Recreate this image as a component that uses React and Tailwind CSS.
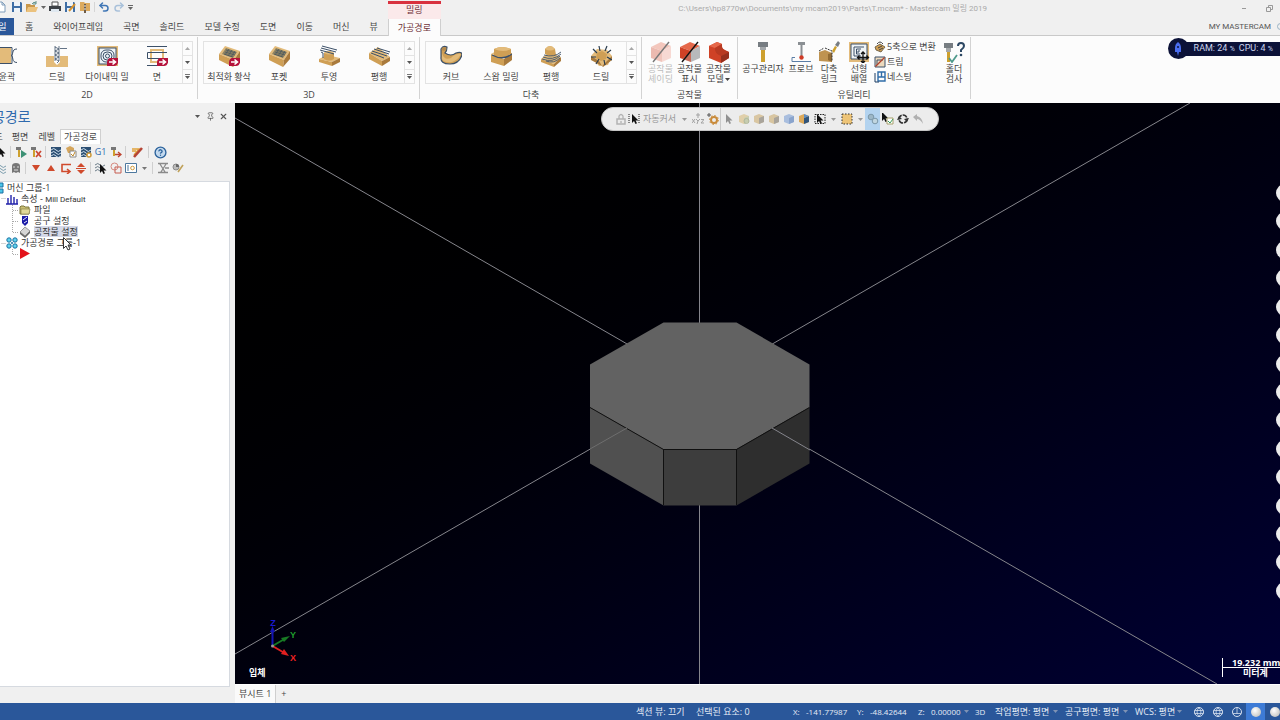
import { CircleHelp, Pin, Redo2, Undo2, X } from "lucide-react";

const WOOD = "#e3bb7a";
const WOOD_MID = "#cf9f55";
const WOOD_DARK = "#a97a3c";
const NAVY = "#3c5068";

function Icon({ size = 22, box = 22, children }) {
  return (
    <svg width={size} height={size} viewBox={`0 0 ${box} ${box}`} fill="none" aria-hidden="true" className="shrink-0">
      {children}
    </svg>
  );
}

function Caret({ className = "" }) {
  return (
    <svg width="5" height="3" viewBox="0 0 5 3" aria-hidden="true" className={`shrink-0 ${className}`}>
      <path d="M0 0h5L2.5 3z" fill="currentColor" />
    </svg>
  );
}

/* ---------- ribbon icons ---------- */

function ArrowBadge() {
  return (
    <g>
      <path d="M14 13h8v4.500q-1 3.500-4 3.500h-7v-4q1-4 3-4z" fill="#b5123b" />
      <path d="M13 17h5.500M16.500 14.500l3 2.500-3 2.500" stroke="#fff" strokeWidth="1.600" />
    </g>
  );
}

function ContourIcon() {
  return (
    <Icon>
      <path d="M1 3h14v15H1z" fill={WOOD} />
      <path d="M0 2.500h16v16H0M21 4c-6 0-3 6-6 6.500 3 .5 0 7 6 7" stroke={NAVY} />
    </Icon>
  );
}

function DrillIcon() {
  return (
    <Icon>
      <path d="M0 11h8v6l3 3 3-3v-6h8v11H0z" fill={WOOD} />
      <path d="M8 1h6v15l-3 3-3-3z" fill="#fff" />
      <path d="M9 2l4 2-4 2 4 2-4 2 4 2-4 2 4 2-2 2M9 1v15M13 1v15M14 3.500h7" stroke={NAVY} strokeWidth=".8" />
    </Icon>
  );
}

function DynamicMillIcon() {
  return (
    <Icon>
      <path d="M1 1h21v20H1z" fill={WOOD} />
      <rect x="3" y="3" width="17" height="16" fill="#edf3f7" stroke={NAVY} />
      <rect x="5" y="5" width="13" height="12" rx="5" stroke={NAVY} />
      <rect x="7" y="7" width="9" height="8" rx="4" stroke={NAVY} />
      <rect x="9.500" y="9" width="4" height="4" rx="2" stroke={NAVY} />
      <ArrowBadge />
    </Icon>
  );
}

function FaceIcon() {
  return (
    <Icon>
      <rect x="5" y="5" width="12" height="12" stroke={WOOD} strokeWidth="2" />
      <path d="M1 1.500h20M21 7.500H1.500v6H21M1 20.500h12" stroke={NAVY} />
      <ArrowBadge />
    </Icon>
  );
}

function PocketIcon({ badge }) {
  return (
    <Icon>
      <path d="M1 9 7 1l15 5-6 9z" fill={WOOD} />
      <path d="M1 9l15 6-1 7-14-7z" fill={WOOD_MID} />
      <path d="M16 15l6-9v8l-7 8z" fill={WOOD_DARK} />
      <path d="M4 9l4-6 11 4-4 6z" fill="#8d8262" />
      <path d="M6 9l9 3M7 7l10 3M8 5l10 3M7 10l4-6M10 11l4-6M13 12l4-6" stroke="#4d5960" strokeWidth=".8" />
      {badge && <ArrowBadge />}
    </Icon>
  );
}

function ProjectIcon() {
  return (
    <Icon>
      <path d="M1 14l8-4 13 3-8 4z" fill={WOOD} />
      <path d="M1 14l13 3v4L1 17z" fill={WOOD_MID} />
      <path d="M14 17l8-4v4l-8 4z" fill={WOOD_DARK} />
      <path d="M6 14V8q4-4 10 0v6q-5 3-10 0z" fill={WOOD_MID} />
      <path d="M6 8q4-4 10 0-4 3-10 0z" fill={WOOD} />
      <path d="M3 3l15 4M4 1l15 4M2 5l14 4M3 7l2 1v5" stroke={NAVY} />
    </Icon>
  );
}

function ParallelIcon() {
  return (
    <Icon>
      <path d="M1 8 10 2l12 10-8 4z" fill={WOOD} />
      <path d="M1 8l13 8v5L1 14z" fill={WOOD_MID} />
      <path d="M14 16l8-4v4l-8 5z" fill={WOOD_DARK} />
      <path d="M4 6l15 5M6 4l15 5M9 3l13 4M3 8l13 5" stroke={NAVY} />
    </Icon>
  );
}

function CurveIcon() {
  return (
    <Icon>
      <path d="M1 4q2-4 6-2 0 4-2 6 6 4 11 0 6-2 6 2-3 9-12 9Q0 19 1 12z" fill={WOOD_MID} stroke={NAVY} strokeWidth="1.200" />
      <path d="M2 8q2 8 9 5 5-5 10-4-3 6-9 8-8 1-10-3z" fill={WOOD} />
      <ellipse cx="4" cy="4" rx="2.500" ry="1.800" fill="#b58a4b" />
    </Icon>
  );
}

function SwarfIcon() {
  return (
    <Icon>
      <path d="M1 9l7-4 14 3-8 5z" fill={WOOD} />
      <path d="M1 9l13 5v7L1 17z" fill={WOOD_MID} />
      <path d="M14 14l8-6v7l-8 6z" fill={WOOD_DARK} />
      <path d="M4 4q8-4 17 0v5q-8 5-17 2z" fill={WOOD_MID} />
      <path d="M4 4q8-4 17 0-8 4-17 0z" fill={WOOD} />
      <path d="M2 10q11 6 20-1" stroke={NAVY} strokeWidth="1.300" />
    </Icon>
  );
}

function MultiParallelIcon() {
  return (
    <Icon>
      <path d="M1 14l8-7 12 5-7 7z" fill={WOOD} />
      <path d="M1 14l13 5v3L1 17z" fill={WOOD_MID} />
      <path d="M14 19l7-7v4l-7 6z" fill={WOOD_DARK} />
      <path d="M5 9V4q5-6 10 0l1 6q-5 2-11-1z" fill={WOOD_MID} />
      <path d="M5 4q5-6 10 0-5 3-10 0z" fill={WOOD} />
      <path d="M4 10q10 3 17-3M3 12q10 4 18-3M2 14q11 4 18-3M6 16q8 3 14-3" stroke={NAVY} strokeWidth=".9" />
    </Icon>
  );
}

function MultiDrillIcon() {
  return (
    <Icon>
      <path d="M1 11l6-7 10 1 5 6-4 9-9 1z" fill={WOOD} />
      <path d="M1 11l8 5 3 5-11-6zM12 21l10-10v4l-9 7z" fill={WOOD_DARK} />
      <path d="M7 8l5-2 5 3-1 5-5 2-5-3z" fill={WOOD_MID} />
      <path d="M9 1l1 5M17 1l-2 5M3 4l4 4M21 5l-4 3M1 12h5M17 12l5 3M6 19l3-5M15 20l-1-5" stroke="#2b3d4e" strokeWidth="1.200" />
    </Icon>
  );
}

function StockIcon({ variant }) {
  const faded = variant === "shade";
  if (variant === "model") {
    return (
      <Icon>
        <path d="M1 5l8-4 5 2-1 4 8 4v6l-8 5-12-5z" fill="#cf4226" />
        <path d="M1 5l8-4 5 2-7 4z" fill="#e5684a" />
        <path d="M7 7l7-4q-1 6 7 8l-8 4q-7-3-6-8z" fill="#b83a22" />
        <path d="M13 15l8-4v6l-8 5z" fill="#96301e" />
      </Icon>
    );
  }
  return (
    <Icon>
      <g opacity={faded ? 0.35 : 1}>
        <path d="M1 6 11 1l10 4-9 5z" fill="#e5684a" />
        <path d="M1 6l11 4v11L1 17z" fill="#cf4226" />
        <path d="M12 10l9-5v12l-9 4z" fill={faded ? "#ef9a8a" : "#b7b9bb"} />
        <path d="M12 10v11L3 18z" fill={faded ? "#ef9a8a" : "#b7b9bb"} opacity=".35" />
      </g>
      <path d="M3 21 19 1" stroke={faded ? "#777" : "#111"} strokeWidth="1.400" />
    </Icon>
  );
}

function ToolManagerIcon() {
  return (
    <Icon>
      <path d="M6 1h10v5H6z" fill="#777d82" />
      <path d="M8 6h6v3H8z" fill="#a3a7aa" />
      <path d="M9 9h4v12H9z" fill="#cda02e" />
    </Icon>
  );
}

function ProbeIcon() {
  return (
    <Icon>
      <path d="M8 1h7v3H8z" fill="#8a8f93" />
      <path d="M11.500 4v12" stroke="#8a8f93" strokeWidth="2" />
      <circle cx="11.500" cy="16.500" r="2.200" fill="#cf3b26" />
      <path d="M5 16.500H2v4h19" stroke="#5b7ea6" />
    </Icon>
  );
}

function MultiLinkIcon() {
  return (
    <Icon>
      <path d="M1 11l6-2 7 3v9L1 20z" fill="#bf9350" />
      <path d="M14 12v9l-4-2v-6z" fill="#926b33" />
      <path d="M1 10l5-3M7 7l7 3v10" stroke="#333" strokeDasharray="2 1" />
      <path d="M14 10l3-5 2 1-3 6z" fill="#cda02e" />
      <path d="M17 4l3-4 2 2-2 4z" fill="#777d82" />
    </Icon>
  );
}

function LinearArrayIcon() {
  return (
    <Icon>
      <path d="M1 1h20v20H1z" fill={WOOD} />
      <path d="M3 3h16v15H3z" fill="#f0f4f6" stroke={NAVY} />
      <path d="M16 6H6v9h7M13 8H8.500v5H12M12 10h-2v2" stroke={NAVY} />
      <path d="M15 11v11M9.500 16.500h11M13 13l2-2 2 2M13 20l2 2 2-2M11.500 14.500l-2 2 2 2M18.500 14.500l2 2-2 2" stroke="#111" strokeWidth="1.300" />
    </Icon>
  );
}

function HolderCheckIcon() {
  return (
    <Icon>
      <path d="M1 2h9v5H1z" fill="#777d82" />
      <path d="M3 7h5v4H3z" fill="#a3a7aa" />
      <path d="M4 11h3v10H4z" fill="#cda02e" />
      <path d="M6 17l3 4 5-7" stroke="#4f9a8c" strokeWidth="1.800" />
      <path d="M15 5q0-3 3-3t3 3q0 2-3 4v2" stroke="#2c4763" strokeWidth="2" />
      <circle cx="18" cy="14" r="1.300" fill="#2c4763" />
    </Icon>
  );
}

function FiveAxisIcon() {
  return (
    <Icon size={12} box={12}>
      <path d="M1 6l5-3 5 3-4 5-5-2z" fill={WOOD_MID} stroke="#5d5138" strokeWidth=".8" />
      <path d="M3 3q3-4 6 0M4 7l4-2M5 9l4-2" stroke="#444" />
    </Icon>
  );
}

function TrimIcon() {
  return (
    <Icon size={12} box={12}>
      <path d="M1 1h10v10H1z" fill="#ecd9bd" stroke={NAVY} />
      <path d="M3 4h6M3 4v5" stroke={NAVY} />
      <path d="M1.500 10.500l9-9" stroke="#b4412a" strokeWidth="1.300" />
    </Icon>
  );
}

function NestingIcon() {
  return (
    <Icon size={12} box={12}>
      <path d="M4 1h7v9H4zM4 6h7M7.500 1v5" stroke="#2f6ca8" strokeWidth="1.400" />
      <path d="M1 2v9h4" stroke="#1c3c63" />
    </Icon>
  );
}

/* ---------- ribbon ---------- */

function Gallery({ label, items }) {
  return (
    <section className="flex shrink-0 flex-col border-r border-[#d3d3d3] pt-1 pr-1 pl-[5px]">
      <div className="flex h-[46px] border border-[#e3e3e3]">
        {items.map(([name, icon]) => (
          <button key={name} type="button" className="flex w-[50px] flex-col items-center gap-1 pt-[3px] whitespace-nowrap">
            {icon}
            <span className="leading-[12px]">{name}</span>
          </button>
        ))}
        <div className="flex w-[10px] flex-col divide-y divide-[#e3e3e3] border-l border-[#e3e3e3] text-[#555]">
          <button type="button" aria-label={`${label} ▲`} className="flex flex-1 items-center justify-center">
            <Caret className="rotate-180 opacity-50" />
          </button>
          <button type="button" aria-label={`${label} ▼`} className="flex flex-1 items-center justify-center">
            <Caret />
          </button>
          <button type="button" aria-label={label} className="flex flex-1 flex-col items-center justify-center gap-px">
            <span className="h-px w-[5px] bg-[#777]" />
            <Caret />
          </button>
        </div>
      </div>
      <h2 className="mt-[5px] text-center leading-3">{label}</h2>
    </section>
  );
}

function BigButton({ width, icon, lines, disabled, menu }) {
  return (
    <button type="button" disabled={disabled} className={`flex shrink-0 flex-col items-center whitespace-nowrap ${width} ${disabled ? "text-[#bdbdbd]" : ""}`}>
      {icon}
      <span className="mt-px flex flex-col items-center leading-[10px]">
        <span>{lines[0]}</span>
        {lines[1] && (
          <span className="flex items-center gap-px">
            {lines[1]}
            {menu && <Caret />}
          </span>
        )}
      </span>
    </button>
  );
}

const gallery2d = [
  ["윤곽", <ContourIcon />],
  ["드릴", <DrillIcon />],
  ["다이내믹 밀", <DynamicMillIcon />],
  ["면", <FaceIcon />],
];
const gallery3d = [
  ["최적화 황삭", <PocketIcon badge />],
  ["포켓", <PocketIcon />],
  ["투영", <ProjectIcon />],
  ["평행", <ParallelIcon />],
];
const galleryMulti = [
  ["커브", <CurveIcon />],
  ["스왑 밀링", <SwarfIcon />],
  ["평행", <MultiParallelIcon />],
  ["드릴", <MultiDrillIcon />],
];
const smallTools = [
  ["5축으로 변환", <FiveAxisIcon />],
  ["트림", <TrimIcon />],
  ["네스팅", <NestingIcon />],
];

function Ribbon() {
  return (
    <div className="relative flex h-[68px] overflow-hidden border-t border-[#c9c9c9] bg-[#fcfcfc] pt-px pb-1">
      <div className="-ml-6 flex">
        <Gallery label="2D" items={gallery2d} />
        <Gallery label="3D" items={gallery3d} />
        <Gallery label="다축" items={galleryMulti} />
        <section className="flex shrink-0 flex-col border-r border-[#d3d3d3] px-1 pt-1">
          <div className="flex h-[46px]">
            <BigButton width="w-[29px]" icon={<StockIcon variant="shade" />} lines={["공작물", "셰이딩"]} disabled />
            <BigButton width="w-[29px]" icon={<StockIcon variant="show" />} lines={["공작물", "표시"]} />
            <BigButton width="w-[29px]" icon={<StockIcon variant="model" />} lines={["공작물", "모델"]} menu />
          </div>
          <h2 className="mt-[5px] text-center leading-3">공작물</h2>
        </section>
        <section className="flex shrink-0 flex-col border-r border-[#d3d3d3] pt-1">
          <div className="flex h-[46px]">
            <BigButton width="w-[50px]" icon={<ToolManagerIcon />} lines={["공구관리자"]} />
            <BigButton width="w-[26px]" icon={<ProbeIcon />} lines={["프로브"]} />
            <BigButton width="w-[30px]" icon={<MultiLinkIcon />} lines={["다축", "링크"]} />
            <BigButton width="w-[30px]" icon={<LinearArrayIcon />} lines={["선형", "배열"]} />
            <div className="flex w-[64px] flex-col gap-[3px]">
              {smallTools.map(([name, icon]) => (
                <button key={name} type="button" className="flex items-center gap-px leading-3 whitespace-nowrap">
                  {icon}
                  {name}
                </button>
              ))}
            </div>
            <BigButton width="w-[32px]" icon={<HolderCheckIcon />} lines={["홀더", "검사"]} />
          </div>
          <h2 className="mt-[5px] text-center leading-3">유틸리티</h2>
        </section>
      </div>
      <div className="absolute top-[2px] right-0 flex h-[21px] items-center font-['Roboto',sans-serif] text-[9px] text-[#cdd5ee]">
        <span className="z-10 flex size-[21px] items-center justify-center rounded-full bg-[#0c1238]">
          <svg width="8" height="14" viewBox="0 0 8 14" aria-hidden="true">
            <path d="M4 0q3 2 3 6v4H5l-1 4-1-4H1V6q0-4 3-6z" fill="#4a6df0" />
            <circle cx="4" cy="5" r="1" fill="#0c1238" />
          </svg>
        </span>
        <span className="-ml-2 flex h-[14px] items-center gap-1 bg-[#0c1238] pr-[7px] pl-[13px] whitespace-nowrap">
          <span>RAM: 24 <small className="text-[7px]">%</small></span>
          <span>CPU: 4 <small className="text-[7px]">%</small></span>
        </span>
      </div>
    </div>
  );
}

/* ---------- title bar and tabs ---------- */

function FolderIcon() {
  return (
    <Icon size={12} box={12}>
      <path d="M0 3h4l1 1h4v7H0z" fill="#c9974a" />
      <path d="M2 6h10l-2 5H0z" fill="#ebc27e" />
      <path d="M6 3q2-3 4-1M10 0v3H7" stroke="#5c8f87" />
    </Icon>
  );
}

function SaveIcon({ pencil }) {
  return (
    <Icon size={12} box={12}>
      <path d="M1 1h9l1 1v9H1z" fill="#3f6ea5" />
      <path d="M3 1h6v4H3zM3 7h6v4H3z" fill="#eef3f8" />
      {pencil && <path d="M5 10l6-7" stroke="#d7922d" strokeWidth="2" />}
    </Icon>
  );
}

function TitleBar() {
  return (
    <div className="flex h-[18px] items-start pt-px">
      <div className="-ml-1 flex items-center gap-[3px] text-[#666]">
        <button type="button" aria-label="새 파일">
          <Icon size={12} box={12}>
            <path d="M1 1h5l3 3v7H1zM6 1v3h3" fill="#fff" stroke="#7f9cba" />
          </Icon>
        </button>
        <button type="button" aria-label="저장"><SaveIcon /></button>
        <button type="button" aria-label="열기"><FolderIcon /></button>
        <Caret />
        <button type="button" aria-label="인쇄">
          <Icon size={12} box={12}>
            <path d="M3 1h6v4H3z" fill="#fff" stroke="#555" />
            <path d="M0 5h12v5H0z" fill="#3d4146" />
            <path d="M2 8h8v3H2z" fill="#dfe8f0" />
          </Icon>
        </button>
        <button type="button" aria-label="다른 이름으로 저장"><SaveIcon pencil /></button>
        <button type="button" aria-label="압축">
          <Icon size={12} box={12}>
            <path d="M1 1h4l1 1h5v8H1z" fill="#dcaa5e" />
            <path d="M5 3h2v9H5z" fill="#6d5c48" />
            <path d="M5 5h2M5 8h2" stroke="#eee" />
          </Icon>
        </button>
        <span className="h-[10px] w-px bg-[#d5d5d5]" />
        <button type="button" aria-label="실행 취소" className="text-[#3f76b5]"><Undo2 size={12} strokeWidth={3} /></button>
        <button type="button" aria-label="다시 실행" className="text-[#a9c1da]"><Redo2 size={12} strokeWidth={3} /></button>
        <span className="flex flex-col items-center gap-px">
          <span className="h-px w-[5px] bg-[#666]" />
          <Caret />
        </span>
      </div>
      <p className="ml-auto pr-[293px] font-['Roboto','Noto_Sans_CJK_KR',sans-serif] text-[8px] leading-[15px] whitespace-pre text-[#aaa]">
        C:\Users\hp8770w\Documents\my mcam2019\Parts\T.mcam* - Mastercam 밀링 2019
      </p>
      <div className="absolute top-0 right-[7px] flex h-4 items-center gap-[20px] text-[#999]">
        <button type="button" aria-label="최소화" className="h-px w-1 bg-[#999]" />
        <button type="button" aria-label="창 복원">
          <Icon size={7} box={7}>
            <path d="M.5 2.500h4v4h-4zM2.500 2.500v-2h4v4h-2" stroke="#999" />
          </Icon>
        </button>
      </div>
    </div>
  );
}

const ribbonTabs = ["홈", "와이어프레임", "곡면", "솔리드", "모델 수정", "도면", "이동", "머신", "뷰"];

function TabBar() {
  return (
    <nav className="flex h-[17px] items-stretch">
      <button type="button" className="-ml-[10px] mr-px w-[24px] bg-[#2a579a] pr-[11px] text-right whitespace-nowrap text-white">파일</button>
      {ribbonTabs.map((tab) => (
        <button key={tab} type="button" className="px-[10px] whitespace-nowrap">{tab}</button>
      ))}
      <button type="button" className="relative z-10 -mb-px border border-b-0 border-[#cfcfcf] bg-[#fcfcfc] px-[9px] whitespace-nowrap text-[#6e3038]">
        가공경로
        <span className="absolute -inset-x-px bottom-full h-[18px] border-t-[3px] border-[#d9303e] bg-[#fbe9ea] text-center leading-3">밀링</span>
      </button>
      <a href="#mastercam" className="ml-auto self-center pr-[6px] font-['Roboto',sans-serif] text-[8px] text-[#555]">MY MASTERCAM</a>
      <span className="-mr-1 size-[7px] self-center rounded-full border border-[#9ab3c4]" />
    </nav>
  );
}

/* ---------- toolpath manager ---------- */

function Sep() {
  return <span className="mx-[2px] h-3 w-px shrink-0 bg-[#cfcfcf]" />;
}

function Tool({ name, wide, children }) {
  return (
    <button type="button" aria-label={name} className={`flex shrink-0 items-center justify-center ${wide ? "w-[18px]" : "w-[15px]"}`}>
      {children}
    </button>
  );
}

function SmallTool({ children }) {
  return <Icon size={12} box={12}>{children}</Icon>;
}

function Pointer({ x = 0, y = 0, fill = "#111" }) {
  return <path transform={`translate(${x} ${y})`} d="M0 0v9l2-2 1.500 3 1.500-.8L3.600 6.500H6.500z" fill={fill} />;
}

function Waves({ gear }) {
  return (
    <SmallTool>
      <path d="M1 1h10v10H1z" fill="#2c4f73" />
      <path d="M1 4q3-3 5 0t5 0M1 7q3-3 5 0t5 0M1 10q3-3 5 0t5 0" stroke="#d2e2ef" />
      {gear && <circle cx="9" cy="9" r="2" fill="#fff" stroke="#d09a3a" strokeWidth="1.500" />}
    </SmallTool>
  );
}

function PanelTools() {
  return (
    <div className="flex flex-col">
      <div className="-ml-[7px] flex h-4 items-center">
        <Tool name="선택"><SmallTool><Pointer x={4} y={1} /></SmallTool></Tool>
        <Sep />
        <Tool name="모두 재생성">
          <SmallTool>
            <path d="M1 1h5v3H1z" fill="#777" />
            <path d="M3 4h2v7H3z" fill="#cda02e" />
            <path d="M6 4l6 4-6 4z" fill="#3d9175" />
          </SmallTool>
        </Tool>
        <Tool name="변경된 작업 재생성">
          <SmallTool>
            <path d="M1 1h5v3H1z" fill="#777" />
            <path d="M3 4h2v7H3z" fill="#cda02e" />
            <path d="M6 5l5 6M11 5l-5 6" stroke="#cc4630" strokeWidth="1.700" />
          </SmallTool>
        </Tool>
        <Sep />
        <Tool name="경로 재생"><Waves /></Tool>
        <Tool name="검증">
          <SmallTool>
            <path d="M1 2l4-2 4 2v5H3z" fill="#d5a55b" />
            <path d="M5 5h6v6H5z" fill="#fff" stroke="#888" />
            <path d="M6 8l2 2 2-4" stroke="#bd8626" />
          </SmallTool>
        </Tool>
        <Tool name="시뮬레이션"><Waves gear /></Tool>
        <Tool name="포스트"><span className="text-[9px] text-[#2f6aad]">G1</span></Tool>
        <Tool name="고속 이송">
          <SmallTool>
            <path d="M1 1h5v3H1z" fill="#777" />
            <path d="M3 4h2v6H3z" fill="#cda02e" />
            <path d="M5 8.500h5M8 6l3 2.500L8 11" stroke="#bd4430" strokeWidth="1.300" />
          </SmallTool>
        </Tool>
        <Sep />
        <Tool name="작업 편집" wide>
          <SmallTool>
            <path d="M1 3h7L3 9M1 5h4" stroke="#e0a33d" strokeWidth="1.500" />
            <path d="M3 11l8-9" stroke="#b54334" strokeWidth="2.600" />
          </SmallTool>
        </Tool>
        <Sep />
        <Tool name="도움말" wide><CircleHelp size={13} strokeWidth={2.500} className="text-[#2d639c]" fill="#c3d9ee" /></Tool>
      </div>
      <div className="-ml-[7px] flex h-4 items-center">
        <Tool name="경로 표시"><SmallTool><path d="M1 4q3-3 5 0t5 0M1 7q3-3 5 0t5 0M1 10q3-3 5 0t5 0" stroke="#7c9dad" /></SmallTool></Tool>
        <Tool name="포스트 잠금">
          <SmallTool>
            <path d="M2 11V4q0-3 4-3t4 3v7l-2-1-2 1-2-1z" fill="#777" />
            <path d="M4 4v2M8 4v2M4 8h4" stroke="#ddd" />
          </SmallTool>
        </Tool>
        <Sep />
        <Tool name="아래로 이동"><SmallTool><path d="M2 3h8l-4 6z" fill="#d04a2c" /></SmallTool></Tool>
        <Tool name="위로 이동"><SmallTool><path d="M2 9h8L6 3z" fill="#d04a2c" /></SmallTool></Tool>
        <Tool name="삽입 위치"><SmallTool><path d="M11 2.500H2v7h7M7 7l3 2.500L7 12" stroke="#d04a2c" strokeWidth="1.600" /></SmallTool></Tool>
        <Tool name="삽입 화살표 보기"><SmallTool><path d="M2 5h8L6 1zM2 8h8l-4 4zM1 6h10v1H1z" fill="#d04a2c" /></SmallTool></Tool>
        <Sep />
        <Tool name="선택한 경로만 표시">
          <SmallTool>
            <path d="M0 3q3-3 5 0t5 0M0 6q3-3 5 0M0 9q3-3 5 0" stroke="#6b7c88" />
            <Pointer x={5} y={2} />
          </SmallTool>
        </Tool>
        <Tool name="연관 지오메트리">
          <SmallTool>
            <circle cx="4.500" cy="4.500" r="3.500" stroke="#d58a80" />
            <path d="M5 5h6v6H5z" stroke="#c65c50" />
          </SmallTool>
        </Tool>
        <Tool name="표시 옵션">
          <SmallTool>
            <path d="M.5 1.500h11v9H.5z" fill="#fff" stroke="#4d789e" />
            <path d="M2 4h2M2 6h2M2 8h2" stroke="#4d789e" />
            <circle cx="7.500" cy="6" r="1.800" stroke="#d09a3a" />
          </SmallTool>
        </Tool>
        <span className="flex w-3 justify-center"><Caret className="text-[#777]" /></span>
        <Sep />
        <Tool name="가공 시간"><SmallTool><path d="M1 1.500h10M1 10.500h10M3 2l5 8M9 2l-5 8M8 6h4" stroke="#8a8a8a" strokeWidth="1.300" /></SmallTool></Tool>
        <Tool name="공구 확인">
          <SmallTool>
            <circle cx="4" cy="5" r="3" fill="#bbb" stroke="#8b8b8b" />
            <path d="M4 5V2a3 3 0 0 1 3 3z" fill="#666" />
            <path d="M6 10l5-7" stroke="#c0a15a" strokeWidth="1.600" />
          </SmallTool>
        </Tool>
      </div>
    </div>
  );
}

function GroupIcon() {
  return (
    <SmallTool>
      {[3, 9].map((x) => [3, 9].map((y) => (
        <circle key={`${x}-${y}`} cx={x} cy={y} r="2.200" fill="#5ed3ee" stroke="#1a6fa0" />
      )))}
      <path d="M5 6h2M6 5v2" stroke="#1a6fa0" />
    </SmallTool>
  );
}

function TreeRow({ indent, icon, children, selected }) {
  return (
    <li className={`flex h-[11px] items-center gap-[3px] whitespace-nowrap ${indent}`}>
      {icon}
      {children && <span className={`leading-[11px] ${selected ? "bg-[#d5d9e8]" : ""}`}>{children}</span>}
    </li>
  );
}

function OperationsTree() {
  return (
    <ul className="relative text-[#333]">
      <svg width="24" height="80" viewBox="0 0 24 80" fill="none" aria-hidden="true" className="absolute top-0 left-0">
        <path d="M1.500 16.500H6M12.500 23v28M13 28.500h6M13 39.500h6M13 50.500h6M1.500 61.500H6M12.500 67v5.500H19" stroke="#aaa" strokeDasharray="1 1" />
      </svg>
      <TreeRow indent="-ml-2" icon={
        <SmallTool>
          <path d="M2 1h9v4H2zM2 7h9v4H2z" fill="#4cc6ea" stroke="#1a6fa0" />
        </SmallTool>
      }>
        머신 그룹-1
      </TreeRow>
      <TreeRow indent="ml-[6px]" icon={<SmallTool><path d="M2 11V5M5 11V2M8 11V4M11 11V6M0 11h12" stroke="#2222aa" strokeWidth="1.400" /></SmallTool>}>
        속성 - <span className="font-['Roboto',sans-serif] text-[8px]">Mill Default</span>
      </TreeRow>
      <TreeRow indent="ml-[19px]" icon={
        <SmallTool>
          <path d="M1 3l1-1h3l1 1h4v7H1z" fill="#c9bf73" stroke="#7c763e" />
          <path d="M2 5h9l-1 5H2z" fill="#e0d898" stroke="#7c763e" strokeWidth=".6" />
        </SmallTool>
      }>
        파일
      </TreeRow>
      <TreeRow indent="ml-[19px]" icon={
        <SmallTool>
          <path d="M3 1h6v7l-3 3-3-3z" fill="#1c1ca8" />
          <path d="M4 5l4-3M5 8l3-2" stroke="#eef" />
        </SmallTool>
      }>
        공구 설정
      </TreeRow>
      <TreeRow indent="ml-[19px]" selected icon={
        <SmallTool>
          <path d="M1 6l5-5 5 4-5 5z" fill="#d5d5d5" stroke="#777" strokeWidth=".7" />
          <path d="M1 6l5 4 5-5v2l-5 5-5-4z" fill="#666" />
        </SmallTool>
      }>
        공작물 설정
      </TreeRow>
      <TreeRow indent="ml-[6px]" icon={<GroupIcon />}>가공경로 그룹-1</TreeRow>
      <TreeRow indent="ml-[19px]" icon={<Icon size={11} box={11}><path d="M1 0l10 5.500L1 11z" fill="#e3131b" /></Icon>} />
      <li aria-hidden="true" className="absolute top-[55px] left-[63px]">
        <svg width="9" height="14" viewBox="0 0 9 14">
          <path d="M.5.5v11l2.500-2.500 2 4 2-1-2-4h3z" fill="#fff" stroke="#333" />
        </svg>
      </li>
    </ul>
  );
}

function SidePanel() {
  return (
    <aside className="flex w-[235px] shrink-0 flex-col overflow-hidden bg-[#f0f0f0]">
      <div className="flex h-[26px] items-center">
        <h1 className="-ml-[21px] text-[14px] whitespace-nowrap text-[#2f6aad]">가공경로</h1>
        <div className="ml-auto flex items-center gap-1 pr-[7px] text-[#555]">
          <button type="button" aria-label="메뉴" className="flex w-[9px] justify-center"><Caret /></button>
          <button type="button" aria-label="고정"><Pin size={9} /></button>
          <button type="button" aria-label="닫기"><X size={9} strokeWidth={3} /></button>
        </div>
      </div>
      <div className="-ml-[26px] flex h-[15px] items-stretch whitespace-nowrap">
        <button type="button" className="px-1">솔리드</button>
        <button type="button" className="px-[5px]">평면</button>
        <button type="button" className="px-[5px]">레벨</button>
        <button type="button" className="border border-b-0 border-[#d0d0d0] bg-white px-[3px]">가공경로</button>
      </div>
      <PanelTools />
      <div className="mt-[5px] mr-[5px] mb-4 flex-1 border border-l-0 border-[#d6dae0] bg-white">
        <OperationsTree />
      </div>
    </aside>
  );
}

/* ---------- viewport ---------- */

function SelectionBar() {
  const cubes = ["#e0cfa9", "#d9c6a2", "#d8c5a0", "#a9bede"];
  return (
    <div className="absolute top-1 left-[366px] flex h-6 items-center rounded-full border border-[#c4c4c4] bg-[#ececec] pr-[13px] pl-[11px] text-[#999]">
      <Tool name="잠금">
        <SmallTool>
          <path d="M2 6h8v5H2z" stroke="#b3b3b3" strokeWidth="1.500" />
          <path d="M4 6V3q2-3 4 0v3M6 8v2" stroke="#b3b3b3" strokeWidth="1.300" />
        </SmallTool>
      </Tool>
      <button type="button" className="flex items-center gap-[3px] whitespace-nowrap">
        <SmallTool>
          <path d="M1 1v10M11 1v10" stroke="#222" strokeDasharray="1 1" />
          <Pointer x={4} y={1} />
        </SmallTool>
        자동커서
        <Caret className="mx-[3px]" />
      </button>
      <Tool name="좌표 입력"><SmallTool><path d="M6 0v5M4 2h4M0 6l3 4M3 6l-3 4M4 6l2 2 2-2M6 8l-1 3M9 6.500h3L9 10h3" stroke="#a3a3a3" /></SmallTool></Tool>
      <Tool name="커서 설정">
        <SmallTool>
          <path d="M0 2h4M2 0v4" stroke="#555" />
          <circle cx="7" cy="7" r="3" stroke="#c98b3b" strokeWidth="2" />
          <circle cx="7" cy="7" r="4.500" stroke="#c98b3b" strokeDasharray="1.500 2" />
        </SmallTool>
      </Tool>
      <span className="h-[22px] w-px bg-[#c9c9c9]" />
      <Tool name="선택 커서"><SmallTool><Pointer x={3} y={1} fill="#909090" /></SmallTool></Tool>
      {cubes.map((fill, i) => (
        <Tool key={i} name={`솔리드 선택 ${i + 1}`}>
          <SmallTool>
            <path d="M1 3l5-2 5 2v6l-5 2-5-2z" fill={fill} />
            <path d="M6 5l5-2v6l-5 2z" fill={i === 3 ? "#8aa4cc" : i === 0 ? "#c7cdb0" : "#a9a49b"} />
            {i === 0 && <circle cx="8.500" cy="8" r="2.500" stroke="#b0b89c" />}
          </SmallTool>
        </Tool>
      ))}
      <Tool name="솔리드 면">
        <SmallTool>
          <path d="M1 3l5-2 5 2v6l-5 2-5-2z" fill="#dca95a" />
          <path d="M6 5l5-2v6l-5 2z" fill="#32557b" />
          <path d="M6 1l5 2-5 2z" fill="#5e8fc9" />
        </SmallTool>
      </Tool>
      <Tool name="선택 방법" wide>
        <SmallTool>
          <path d="M1 1.500h10v9H1z" stroke="#222" strokeDasharray="1.500 1" />
          <Pointer x={3} y={1} />
        </SmallTool>
      </Tool>
      <Caret className="mx-[2px]" />
      <Tool name="창 선택" wide>
        <SmallTool><path d="M1 1h10v10H1z" fill="#edc478" stroke="#333" strokeDasharray="1.500 1.500" /></SmallTool>
      </Tool>
      <Caret className="mx-[2px]" />
      <button type="button" aria-label="전체 선택" className="flex h-[22px] w-[15px] items-center justify-center bg-[#b3d3ef]">
        <SmallTool>
          <circle cx="4" cy="4" r="2.800" fill="#9db7c6" stroke="#7c98a9" />
          <circle cx="8" cy="8" r="2.800" fill="#c0d5df" stroke="#7c98a9" />
        </SmallTool>
      </button>
      <Tool name="선택 확인">
        <SmallTool>
          <Pointer x={0} y={-1} />
          <path d="M5 5h6v6H5z" fill="#fff" stroke="#a8a06a" />
          <path d="M6 8l2 2 3-4" stroke="#3b9a5c" />
        </SmallTool>
      </Tool>
      <Tool name="선택 반전">
        <SmallTool>
          <circle cx="6" cy="6" r="4" stroke="#333" strokeWidth="1.600" strokeDasharray="5 1" />
          <path d="M0 7l2-4 3 3zM12 5l-2 4-3-3z" fill="#333" />
        </SmallTool>
      </Tool>
      <Tool name="마지막 선택">
        <SmallTool>
          <path d="M1 4l4-3v2q5 1 6 8-3-5-6-5v2z" fill="#b0b0b0" />
        </SmallTool>
      </Tool>
    </div>
  );
}

function Scene() {
  return (
    <svg viewBox="235 103 1045 581" preserveAspectRatio="xMidYMid slice" className="absolute inset-0 size-full" fill="none" aria-hidden="true">
      <path d="M235 118 1217 684M235 654 1190 103M699.500 103v581" stroke="#85858c" />
      <path d="M663.500 322.500h73l73 42v43l-73 42h-73l-73.500-42v-43z" fill="#626262" />
      <path d="M590 407l73.500 42v56.500L590 463.500z" fill="#505050" />
      <path d="M663.500 449h73v56.500h-73z" fill="#3d3d3d" />
      <path d="M736.500 449l73-42v56.500l-73 42z" fill="#2e2e2e" />
      <path d="M590 407.500l73.500 42h73l73-42M663.500 449v56M736.500 449v56" stroke="#101010" />
      <path d="M590 449l37-21" stroke="#6e6e6e" />
      <path d="M772 428l38 22" stroke="#85858c" />
      <path d="M272.500 646v-16" stroke="#1414b4" strokeWidth="2" />
      <path d="M270 632l2.500-6 2.500 6z" fill="#1414b4" />
      <path d="M272.500 646l12-7" stroke="#187a24" strokeWidth="2" />
      <path d="M281 638l9-2-6 6z" fill="#187a24" />
      <path d="M272.500 646l12 7" stroke="#e02020" strokeWidth="2" />
      <path d="M284 649l5 7-8-2z" fill="#e02020" />
      <circle cx="272.500" cy="646" r="1.500" fill="#999" />
      <g fontSize="9" fontWeight="700" textAnchor="middle" className="font-['Liberation_Sans',sans-serif]">
        <text x="273" y="626" fill="#1a1ad0">Z</text>
        <text x="293" y="638" fill="#1f9c2c">Y</text>
        <text x="293" y="661" fill="#f02222">X</text>
      </g>
    </svg>
  );
}

function Viewport() {
  return (
    <div className="relative flex-1 overflow-hidden bg-linear-to-br from-black to-[#000034]">
      <Scene />
      <SelectionBar />
      <span className="absolute bottom-[5px] left-[14px] leading-3 font-bold text-white">입체</span>
      <div className="absolute right-0 bottom-[7px] flex w-[58px] flex-col border-l border-white pl-[9px] font-bold text-white">
        <span className="leading-[9px] whitespace-nowrap">19.232 mm</span>
        <span className="-ml-[9px] h-px bg-white" />
        <span className="pl-[11px] leading-[9px]">미터계</span>
      </div>
      <div className="absolute top-[81px] -right-[14px] flex h-[416px] flex-col justify-between">
        {Array.from({ length: 15 }, (_, i) => (
          <button key={i} type="button" aria-label={`도구 ${i + 1}`} className="size-[18px] rounded-full bg-[#ececec]" />
        ))}
      </div>
    </div>
  );
}

function StatusBar() {
  const planes = [
    ["w-[58px]", "작업평면: 평면"],
    ["w-[58px]", "공구평면: 평면"],
    ["w-[42px]", "WCS: 평면"],
  ];
  return (
    <footer className="flex h-[17px] items-center justify-end overflow-hidden bg-[#2a579a] whitespace-nowrap text-[#e6ecf6]">
      <span className="w-[60px]">섹션 뷰: 끄기</span>
      <span className="w-[97px]">선택된 요소: 0</span>
      <span className="w-[13px] text-[8px]">X:</span>
      <span className="w-[51px] text-[8px]">-141.77987</span>
      <span className="w-[13px] text-[8px]">Y:</span>
      <span className="w-[48px] text-[8px]">-48.42644</span>
      <span className="w-[13px] text-[8px]">Z:</span>
      <span className="w-[33px] text-[8px]">0.00000</span>
      <Caret className="mr-[6px] text-[#7f93b5]" />
      <span className="w-[20px] text-[8px]">3D</span>
      {planes.map(([width, text]) => (
        <button key={text} type="button" className="flex items-center">
          <span className={`text-left ${width}`}>{text}</span>
          <Caret className="mr-[7px] text-[#7f93b5]" />
        </button>
      ))}
      <div className="-mr-1 flex h-full">
        {[0, 1, 2].map((i) => (
          <button key={i} type="button" aria-label={`와이어프레임 ${i + 1}`} className="flex w-[19px] items-center justify-center">
            <SmallTool>
              <circle cx="6" cy="6" r="4.500" stroke="#d5dfee" />
              <path d={i === 2 ? "M6 1.500v6M2 7.500h8" : "M1.500 4.500h9M1.500 7.500h9M6 1.500q-4 4.500 0 9M6 1.500q4 4.500 0 9"} stroke="#d5dfee" strokeWidth=".8" />
            </SmallTool>
          </button>
        ))}
        <button type="button" aria-label="음영" className="flex w-[19px] items-center justify-center bg-[#3d7bd6]">
          <span className="size-[10px] rounded-full bg-radial-[at_40%_35%] from-white to-[#b5b5b0]" />
        </button>
        <button type="button" aria-label="재질" className="flex w-[19px] items-center justify-center">
          <span className="size-[10px] rounded-full bg-radial-[at_40%_35%] from-white to-[#b5b5b0]" />
        </button>
      </div>
    </footer>
  );
}

export default function App() {
  return (
    <div className="flex h-screen flex-col overflow-hidden bg-[#f0f0f0] font-['Open_Sans','Noto_Sans_CJK_KR',sans-serif] text-[9px] text-[#444]">
      <header className="relative">
        <TitleBar />
        <TabBar />
        <Ribbon />
      </header>
      <main className="flex min-h-0 flex-1">
        <SidePanel />
        <div className="flex min-w-0 flex-1 flex-col">
          <Viewport />
          <div className="flex h-[19px] items-stretch border-t border-white">
            <button type="button" className="border-r border-[#cfcfcf] bg-[#fafafa] px-1 whitespace-nowrap">뷰시트 1</button>
            <button type="button" aria-label="뷰시트 추가" className="px-[5px]">+</button>
          </div>
        </div>
      </main>
      <StatusBar />
    </div>
  );
}
